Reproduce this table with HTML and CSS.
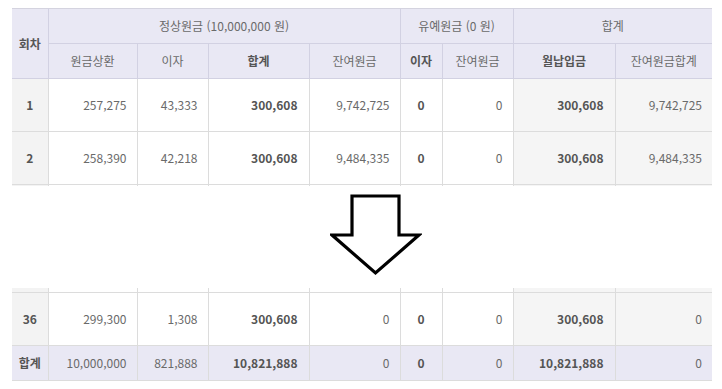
FILE: index.html
```html
<!DOCTYPE html>
<html lang="ko">
<head>
<meta charset="utf-8">
<link rel="stylesheet" href="styles.css">
</head>
<body>
<div class="page">
  <div class="clip top-clip">
    <table class="grid">
      <colgroup>
        <col class="c1"><col class="c2"><col class="c3"><col class="c4"><col class="c5"><col class="c6"><col class="c7"><col class="c8"><col class="c9">
      </colgroup>
      <thead>
        <tr class="h1">
          <th rowspan="2" class="bold">회차</th>
          <th colspan="4">정상원금 (10,000,000 원)</th>
          <th colspan="2">유예원금 (0 원)</th>
          <th colspan="2">합계</th>
        </tr>
        <tr class="h2">
          <th>원금상환</th>
          <th>이자</th>
          <th class="bold">합계</th>
          <th>잔여원금</th>
          <th class="bold">이자</th>
          <th>잔여원금</th>
          <th class="bold">월납입금</th>
          <th>잔여원금합계</th>
        </tr>
      </thead>
      <tbody>
        <tr class="row">
          <td class="no">1</td><td>257,275</td><td>43,333</td><td class="b">300,608</td><td>9,742,725</td><td class="mid b">0</td><td>0</td><td class="sum b">300,608</td><td class="sum">9,742,725</td>
        </tr>
        <tr class="row">
          <td class="no">2</td><td>258,390</td><td>42,218</td><td class="b">300,608</td><td>9,484,335</td><td class="mid b">0</td><td>0</td><td class="sum b">300,608</td><td class="sum">9,484,335</td>
        </tr>
        <tr class="row">
          <td class="no"></td><td></td><td></td><td></td><td></td><td></td><td></td><td class="sum"></td><td class="sum"></td>
        </tr>
      </tbody>
    </table>
  </div>

  <div class="arrow-row">
    <svg class="arrow" width="92" height="82" viewBox="0 0 92 82" aria-hidden="true">
      <polygon points="22,2 69,2 69,41 89,41 45.5,79 2,41 22,41" fill="#fff" stroke="#000" stroke-width="3.2" stroke-linejoin="miter"/>
    </svg>
  </div>

  <div class="clip bottom-clip">
    <table class="grid">
      <colgroup>
        <col class="c1"><col class="c2"><col class="c3"><col class="c4"><col class="c5"><col class="c6"><col class="c7"><col class="c8"><col class="c9">
      </colgroup>
      <tbody>
        <tr class="stub">
          <td class="no"></td><td></td><td></td><td></td><td></td><td></td><td></td><td class="sum"></td><td class="sum"></td>
        </tr>
        <tr class="row">
          <td class="no">36</td><td>299,300</td><td>1,308</td><td class="b">300,608</td><td class="plain">0</td><td class="mid b">0</td><td>0</td><td class="sum b">300,608</td><td class="sum">0</td>
        </tr>
        <tr class="total">
          <td class="no">합계</td><td>10,000,000</td><td>821,888</td><td class="b">10,821,888</td><td>0</td><td class="mid b">0</td><td>0</td><td class="b">10,821,888</td><td>0</td>
        </tr>
      </tbody>
    </table>
  </div>
</div>
</body>
</html>
```

FILE: styles.css
```css
html, body {
  margin: 0;
  padding: 0;
  background: #fff;
}

.page {
  padding: 8px 0 0 12px;
  font-family: "Noto Sans CJK KR", "DejaVu Sans", sans-serif;
  font-size: 12px;
  color: #6a6a6a;
}

.clip {
  width: 700px;
  overflow: hidden;
}

.top-clip {
  height: 178px;
}

.grid {
  width: 700px;
  border-collapse: collapse;
  table-layout: fixed;
}

.c1 { width: 36px; }
.c2 { width: 89px; }
.c3 { width: 71px; }
.c4 { width: 101px; }
.c5 { width: 91px; }
.c6 { width: 42px; }
.c7 { width: 71px; }
.c8 { width: 102px; }
.c9 { width: 97px; }

.grid th,
.grid td {
  padding: 0 10px 0 0;
  border: 1px solid #dcdcdc;
  line-height: 14px;
  white-space: nowrap;
  overflow: hidden;
  color: #6a6a6a;
}

.grid tr > :first-child { border-left: 0; }
.grid tr > :last-child { border-right: 0; }

.grid th {
  background: #e9e8f4;
  border-color: #d2d1e2;
  font-weight: normal;
  text-align: center;
  padding: 0;
}

.grid thead tr.h1 th { border-top: 1px solid #d4d3df; }

.grid th.bold {
  font-weight: bold;
  color: #555;
}

.h1 { height: 35px; }
.h2 { height: 35px; }
.row { height: 53px; }

.grid td {
  text-align: right;
  background: #fff;
}

.grid td.plain {
  color: #6a6a6a;
}

.grid td.no {
  text-align: center;
  padding: 0;
  background: #f3f3f3;
  font-weight: bold;
  color: #555;
}

.grid td.b {
  font-weight: bold;
  color: #555;
  padding-right: 11px;
}

.grid td.mid {
  text-align: center;
  padding: 0;
}

.grid td.sum {
  background: #f5f5f5;
}

.arrow-row {
  display: flex;
  padding-left: 318px;
  margin-top: 8px;
  height: 82px;
}

.arrow {
  display: block;
}

.bottom-clip {
  margin-top: 12px;
}

.stub { height: 4px; }
.stub td { border-top: 0; line-height: 0; font-size: 0; }

.total { height: 35px; }

.grid .total td {
  background: #e9e8f4;
  border-top-color: #cfcee0;
}

.grid .total td.no {
  background: #e9e8f4;
}
```
